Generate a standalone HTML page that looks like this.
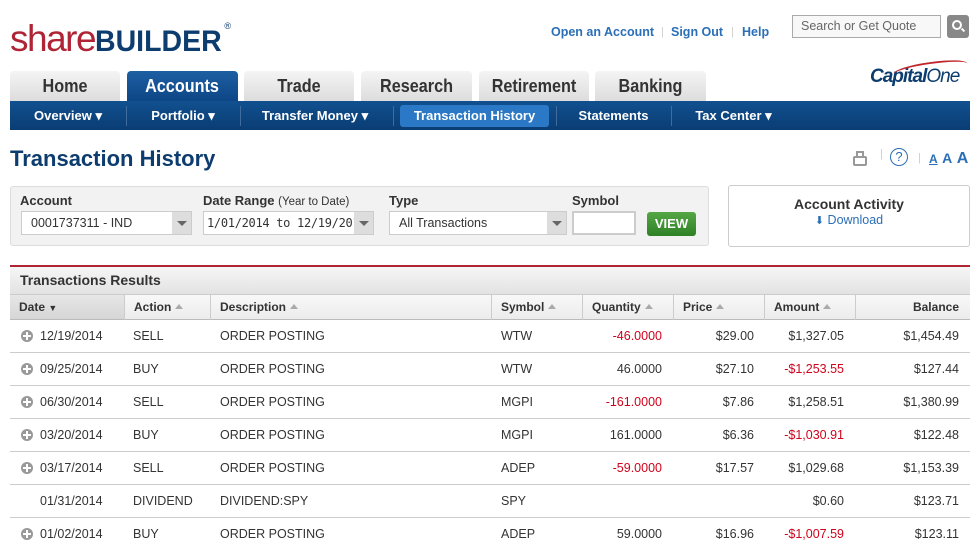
<!DOCTYPE html>
<html><head><style>
*{margin:0;padding:0;box-sizing:border-box}
body{width:980px;height:554px;overflow:hidden;background:#fff;font-family:"Liberation Sans",Arial,sans-serif;position:relative;color:#333}
.a{position:absolute}
.logo{left:10px;top:4px;font-size:37px;letter-spacing:-1.5px;line-height:44px;white-space:nowrap}
.tab{position:absolute;top:71px;height:31px;background:linear-gradient(#f4f4f4,#dcdcdc);border-radius:4px 4px 0 0;font-weight:bold;font-size:18px;color:#333;text-align:center;line-height:31px}
.tab b{display:inline-block;transform:scaleX(0.9)}
.tab.on{background:linear-gradient(#1d5fa3,#0d4585);color:#fff}
.nav{left:10px;top:101px;width:960px;height:29px;background:linear-gradient(#11508f,#0a3d74)}
.sub{position:absolute;top:101px;height:29px;line-height:29px;color:#fff;font-weight:bold;font-size:13px;text-align:center;white-space:nowrap}
.sep{position:absolute;top:106px;width:1px;height:20px;background:#3f6c9c}
.lnk{color:#2a6fb8;font-weight:bold;font-size:12.5px;top:25px}
.sel{position:absolute;top:211px;height:24px;background:#fff;border:1px solid #ccc;font-size:12.5px;line-height:22px;padding-left:9px;color:#333;white-space:nowrap;overflow:hidden}
.sel i{position:absolute;right:0;top:0;width:19px;height:22px;background:#ddd}
.sel i:after{content:"";position:absolute;left:5px;top:9px;border:5px solid transparent;border-top:5px solid #666}
.lbl{position:absolute;top:193px;font-weight:bold;font-size:13px;color:#333}
.hd{position:absolute;top:294px;height:26px;line-height:26px;font-weight:bold;font-size:12px;color:#333;border-left:1px solid #ccc;padding-left:9px}
.row{position:absolute;left:10px;width:960px;height:33px;border-bottom:1px solid #ccc;font-size:12.5px;color:#333}
.row span{position:absolute;top:9px}
.neg{color:#d0021b}
.plus{position:absolute;left:11px;top:10px;width:12px;height:12px;border-radius:50%;background:#999}
.plus:before{content:"";position:absolute;left:2px;top:5px;width:8px;height:2px;background:#fff}
.plus:after{content:"";position:absolute;left:5px;top:2px;width:2px;height:8px;background:#fff}
.up{display:inline-block;border:4px solid transparent;border-bottom:5px solid #aaa;margin-left:4px;vertical-align:2px}
</style></head><body>
<div class="a logo"><span style="color:#b02535">share</span><span style="color:#0d3c6e;font-weight:bold;font-size:30px;letter-spacing:0;display:inline-block;transform:scaleX(0.95);transform-origin:left">BUILDER</span><sup style="color:#0d3c6e;font-size:9px;vertical-align:22px;margin-left:-4px">®</sup></div>
<div class="a lnk" style="left:551px">Open an Account</div>
<div class="a" style="left:661px;top:26px;color:#ccc;font-size:11px">|</div>
<div class="a lnk" style="left:671px">Sign Out</div>
<div class="a" style="left:731px;top:26px;color:#ccc;font-size:11px">|</div>
<div class="a lnk" style="left:742px">Help</div>
<div class="a" style="left:792px;top:15px;width:149px;height:23px;border:1px solid #aaa;background:#f8f8f8;font-size:12.5px;color:#666;padding:3px 0 0 8px;white-space:nowrap">Search or Get Quote</div>
<div class="a" style="left:947px;top:15px;width:22px;height:23px;background:#888;border-radius:3px"><div class="a" style="left:5px;top:5px;width:10px;height:10px;border:2px solid #fff;border-radius:50%"></div><div class="a" style="left:14px;top:14px;width:4px;height:2px;background:#fff;transform:rotate(45deg)"></div></div>
<div class="a" style="left:870px;top:66px;font-size:19px;font-weight:bold;font-style:italic;color:#0d3c6e;letter-spacing:-1px">Capital<span style="font-weight:normal">One</span></div>
<div class="a" style="left:893px;top:62px;width:75px;height:14px;border-top:2px solid #c0272d;border-radius:50% 50% 0 0;transform:rotate(-8deg)"></div>
<div class="tab" style="left:10px;width:110px"><b>Home</b></div>
<div class="tab on" style="left:127px;width:111px"><b>Accounts</b></div>
<div class="tab" style="left:244px;width:110px"><b>Trade</b></div>
<div class="tab" style="left:361px;width:111px"><b>Research</b></div>
<div class="tab" style="left:479px;width:110px"><b>Retirement</b></div>
<div class="tab" style="left:595px;width:111px"><b>Banking</b></div>
<div class="a nav"></div>
<div class="a" style="left:400px;top:105px;width:149px;height:22px;background:#2b78c6;border-radius:3px"></div>
<div class="sub" style="left:10px;width:116px">Overview ▾</div>
<div class="sep" style="left:126px"></div>
<div class="sub" style="left:126px;width:114px">Portfolio ▾</div>
<div class="sep" style="left:240px"></div>
<div class="sub" style="left:240px;width:150px">Transfer Money ▾</div>
<div class="sep" style="left:393px"></div>
<div class="sub" style="left:400px;width:149px">Transaction History</div>
<div class="sep" style="left:556px"></div>
<div class="sub" style="left:556px;width:115px">Statements</div>
<div class="sep" style="left:671px"></div>
<div class="sub" style="left:671px;width:125px">Tax Center ▾</div>
<div class="a" style="left:10px;top:146px;font-size:22px;font-weight:bold;color:#0d3c6e">Transaction History</div>
<div class="a" style="left:853px;top:156px;width:14px;height:10px;border:2px solid #999;border-radius:2px"></div>
<div class="a" style="left:856px;top:151px;width:8px;height:5px;border:2px solid #999;border-bottom:0"></div>
<div class="a" style="left:880px;top:148px;color:#ccc;font-size:11px">|</div>
<div class="a" style="left:890px;top:148px;width:18px;height:18px;border:1px solid #2a6fb8;border-radius:50%;color:#2a6fb8;font-size:13px;text-align:center;line-height:16px">?</div>
<div class="a" style="left:918px;top:152px;color:#ccc;font-size:11px">|</div>
<div class="a" style="left:929px;top:150px;color:#2a6fb8;font-weight:bold"><span style="font-size:12px;text-decoration:underline">A</span> <span style="font-size:14px">A</span> <span style="font-size:16px">A</span></div>
<div class="a" style="left:10px;top:186px;width:699px;height:60px;background:#f2f2f2;border:1px solid #ddd;border-radius:3px"></div>
<div class="lbl" style="left:20px">Account</div>
<div class="lbl" style="left:203px">Date Range <span style="font-weight:normal;font-size:11.5px">(Year to Date)</span></div>
<div class="lbl" style="left:389px">Type</div>
<div class="lbl" style="left:572px">Symbol</div>
<div class="sel" style="left:21px;width:171px">0001737311 - IND<i></i></div>
<div class="sel" style="left:203px;width:171px;font-family:'DejaVu Sans Mono','Liberation Mono',monospace;font-size:12px;padding-left:3px;letter-spacing:-0.3px">1/01/2014 to 12/19/2014<i></i></div>
<div class="sel" style="left:389px;width:178px">All Transactions<i></i></div>
<div class="a" style="left:572px;top:211px;width:64px;height:24px;background:#fff;border:2px solid #ccc"></div>
<div class="a" style="left:647px;top:212px;width:49px;height:24px;background:linear-gradient(#55a644,#2f8126);border-radius:3px;color:#fff;font-weight:bold;font-size:13px;text-align:center;line-height:24px">VIEW</div>
<div class="a" style="left:728px;top:185px;width:242px;height:62px;border:1px solid #ccc;border-radius:3px;text-align:center">
<div style="font-weight:bold;font-size:14px;margin-top:10px;color:#333">Account Activity</div>
<div style="font-size:12.5px;color:#2a6fb8;margin-top:1px"><span style="font-size:11px">⬇</span> Download</div></div>
<div class="a" style="left:10px;top:265px;width:960px;height:2px;background:#b02535"></div>
<div class="a" style="left:10px;top:267px;width:960px;height:27px;background:linear-gradient(#f6f6f6,#e2e2e2);font-weight:bold;font-size:14px;line-height:27px;padding-left:10px">Transactions Results</div>
<div class="a" style="left:10px;top:294px;width:960px;height:26px;background:linear-gradient(#f8f8f8,#ececec);border-bottom:1px solid #bbb;border-top:1px solid #ccc"></div>
<div class="a" style="left:10px;top:295px;width:114px;height:24px;background:linear-gradient(#e6e6e6,#d6d6d6)"></div>
<div class="hd" style="left:10px;border:0">Date <span style="font-size:9px">▼</span></div>
<div class="hd" style="left:124px">Action<i class="up"></i></div>
<div class="hd" style="left:210px">Description<i class="up"></i></div>
<div class="hd" style="left:491px">Symbol<i class="up"></i></div>
<div class="hd" style="left:582px">Quantity<i class="up"></i></div>
<div class="hd" style="left:673px">Price<i class="up"></i></div>
<div class="hd" style="left:764px">Amount<i class="up"></i></div>
<div class="hd" style="left:855px;width:115px;text-align:right;padding-right:11px">Balance</div>
<div class="row" style="top:320px"><i class="plus"></i><span style="left:30px">12/19/2014</span><span style="left:123px">SELL</span><span style="left:210px">ORDER POSTING</span><span style="left:491px">WTW</span><span class="neg" style="right:308px">-46.0000</span><span style="right:216px">$29.00</span><span style="right:126px">$1,327.05</span><span style="right:11px">$1,454.49</span></div>
<div class="row" style="top:353px"><i class="plus"></i><span style="left:30px">09/25/2014</span><span style="left:123px">BUY</span><span style="left:210px">ORDER POSTING</span><span style="left:491px">WTW</span><span style="right:308px">46.0000</span><span style="right:216px">$27.10</span><span class="neg" style="right:126px">-$1,253.55</span><span style="right:11px">$127.44</span></div>
<div class="row" style="top:386px"><i class="plus"></i><span style="left:30px">06/30/2014</span><span style="left:123px">SELL</span><span style="left:210px">ORDER POSTING</span><span style="left:491px">MGPI</span><span class="neg" style="right:308px">-161.0000</span><span style="right:216px">$7.86</span><span style="right:126px">$1,258.51</span><span style="right:11px">$1,380.99</span></div>
<div class="row" style="top:419px"><i class="plus"></i><span style="left:30px">03/20/2014</span><span style="left:123px">BUY</span><span style="left:210px">ORDER POSTING</span><span style="left:491px">MGPI</span><span style="right:308px">161.0000</span><span style="right:216px">$6.36</span><span class="neg" style="right:126px">-$1,030.91</span><span style="right:11px">$122.48</span></div>
<div class="row" style="top:452px"><i class="plus"></i><span style="left:30px">03/17/2014</span><span style="left:123px">SELL</span><span style="left:210px">ORDER POSTING</span><span style="left:491px">ADEP</span><span class="neg" style="right:308px">-59.0000</span><span style="right:216px">$17.57</span><span style="right:126px">$1,029.68</span><span style="right:11px">$1,153.39</span></div>
<div class="row" style="top:485px"><span style="left:30px">01/31/2014</span><span style="left:123px">DIVIDEND</span><span style="left:210px">DIVIDEND:SPY</span><span style="left:491px">SPY</span><span style="right:126px">$0.60</span><span style="right:11px">$123.71</span></div>
<div class="row" style="top:518px;border:0"><i class="plus"></i><span style="left:30px">01/02/2014</span><span style="left:123px">BUY</span><span style="left:210px">ORDER POSTING</span><span style="left:491px">ADEP</span><span style="right:308px">59.0000</span><span style="right:216px">$16.96</span><span class="neg" style="right:126px">-$1,007.59</span><span style="right:11px">$123.11</span></div>
</body></html>
